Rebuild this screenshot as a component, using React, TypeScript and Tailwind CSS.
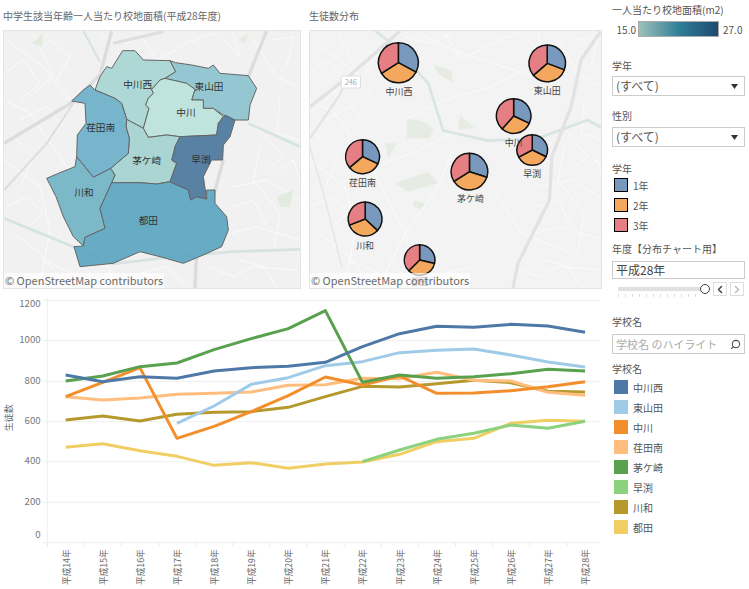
import { ChevronLeft, ChevronRight, Search } from "lucide-react";

type Pt = [number, number];

// map coordinates are 3x screen pixels
const regions: { name: string; fill: string; label: Pt; pts: Pt[] }[] = [
  { name: "中川西", fill: "#a9d6d4", label: [413, 255], pts: [[368,152],[405,152],[430,180],[510,182],[527,215],[495,235],[480,240],[455,268],[460,280],[445,295],[437,315],[447,325],[430,385],[380,358],[365,310],[345,295],[285,270],[300,230],[320,200],[335,205]] },
  { name: "東山田", fill: "#8ec4cf", label: [627, 260], pts: [[510,182],[527,188],[575,195],[625,205],[640,195],[660,220],[745,227],[770,265],[750,315],[745,360],[700,360],[670,345],[640,325],[610,325],[610,300],[575,300],[585,268],[560,250],[495,235],[527,215]] },
  { name: "中川", fill: "#bce1db", label: [558, 338], pts: [[495,235],[480,240],[455,268],[460,280],[445,295],[437,315],[447,325],[430,385],[445,412],[500,405],[540,410],[650,405],[655,370],[670,350],[640,325],[610,325],[610,300],[575,300],[585,268],[560,250]] },
  { name: "茅ケ崎", fill: "#a5d3d0", label: [440, 482], pts: [[380,358],[430,385],[445,412],[500,405],[540,410],[525,440],[525,470],[515,480],[530,490],[510,545],[470,552],[420,548],[385,548],[335,548],[345,525],[332,505],[385,460],[388,415],[378,380]] },
  { name: "荏田南", fill: "#6fb1c8", label: [302, 384], pts: [[270,255],[285,270],[345,295],[365,310],[380,358],[378,380],[388,415],[385,460],[332,505],[280,532],[230,470],[232,405],[258,370],[255,310],[215,303],[250,270]] },
  { name: "川和", fill: "#74b4c5", label: [252, 578], pts: [[230,470],[280,532],[332,505],[345,525],[335,548],[300,625],[315,685],[255,712],[250,738],[220,710],[190,650],[168,590],[140,535],[180,518],[225,500]] },
  { name: "都田", fill: "#5fa7c2", label: [445, 662], pts: [[335,548],[420,548],[470,552],[510,545],[565,570],[572,600],[590,590],[620,597],[620,570],[645,570],[645,610],[680,650],[685,690],[665,740],[610,765],[550,790],[480,770],[420,755],[340,790],[240,800],[222,740],[250,738],[255,712],[315,685],[300,625]] },
  { name: "早渕", fill: "#4f7a9e", label: [603, 478], pts: [[540,410],[650,405],[655,370],[675,345],[705,360],[690,410],[670,435],[668,480],[635,480],[610,530],[620,597],[590,590],[572,600],[565,570],[530,555],[510,545],[530,490],[515,480],[525,440]] },
];

const pies = [
  { name: "中川西", c: [280, 188], r: 60, a: 118, b: 238, label: [282, 275] },
  { name: "東山田", c: [728, 190], r: 55, a: 111, b: 229, label: [728, 272] },
  { name: "中川", c: [627, 348], r: 52, a: 115, b: 222, label: [627, 428] },
  { name: "早渕", c: [683, 450], r: 46, a: 116, b: 242, label: [683, 520] },
  { name: "荏田南", c: [172, 470], r: 51, a: 115, b: 230, label: [172, 548] },
  { name: "茅ケ崎", c: [494, 515], r: 55, a: 108, b: 238, label: [497, 595] },
  { name: "川和", c: [180, 657], r: 51, a: 133, b: 249, label: [180, 737] },
  { name: "都田", c: [344, 780], r: 46, a: 103, b: 225, label: [344, 846] },
];

const series = [
  { color: "#f1ce63", from: 0, ys: [457,446,467,484,511,503,520,507,501,478,440,430,385,376,379] },
  { color: "#8cd17d", from: 8, ys: [500,465,433,415,390,400,379] },
  { color: "#b6992d", from: 0, ys: [375,363,378,358,352,350,337,305,274,276,266,256,263,289,291] },
  { color: "#ffbe7d", from: 0, ys: [305,315,309,298,295,291,271,269,250,251,232,256,258,292,301] },
  { color: "#f28e2b", from: 0, ys: [305,262,218,430,394,350,302,246,270,243,295,294,287,275,260] },
  { color: "#a0cbe8", from: 3, ys: [385,333,268,248,212,200,173,166,162,180,201,216] },
  { color: "#59a14f", from: 0, ys: [258,243,215,204,164,131,101,47,262,240,250,245,236,223,228] },
  { color: "#4e79a7", from: 0, ys: [240,260,245,250,228,218,214,202,155,116,94,97,88,93,112] },
];

const gridYs = [16, 137, 259, 380, 500, 622, 743];
const yLabels: [string, number][] = [["1200",25],["1000",135],["800",257],["600",378],["400",498],["200",620],["0",718]];
const years = ["14","15","16","17","18","19","20","21","22","23","24","25","26","27","28"];
const xAt = (i: number) => 197 + 111.3 * i;

const schools = [
  ["中川西", "#4e79a7"], ["東山田", "#a0cbe8"], ["中川", "#f28e2b"], ["荏田南", "#ffbe7d"],
  ["茅ケ崎", "#59a14f"], ["早渕", "#8cd17d"], ["川和", "#b6992d"], ["都田", "#f1ce63"],
];

const grades = [["1年", "#7899bd"], ["2年", "#f4a85e"], ["3年", "#e67f83"]];

const whiteRoads = [
  "M12 300 L90 340 L200 500 L300 700 L340 860",
  "M30 130 L130 200 L210 300",
  "M100 100 L160 230 L90 290",
  "M12 480 L120 560 L150 690 L120 860",
  "M700 560 L800 540 L900 600",
  "M690 700 L770 680 L900 720",
  "M760 120 L830 230 L900 260",
  "M840 300 L830 400 L900 420",
  "M720 780 L790 800 L830 860",
  "M420 100 L470 180 L560 130 L640 100",
  "M40 700 L120 760 L200 860",
  "M30 400 L100 470 L60 560",
  "M780 440 L760 540 L840 640 L820 760",
  "M12 220 L70 180 L120 250 L60 300",
  "M150 120 L210 170 L170 240",
  "M60 360 L140 320 L190 380",
  "M20 620 L80 590 L130 640 L70 690",
  "M130 780 L220 820 L300 860",
  "M420 820 L500 800 L560 860",
  "M620 800 L700 830 L760 800 L890 810",
  "M700 620 L760 600 L800 680",
  "M830 520 L880 480 L900 540",
  "M660 110 L720 170 L700 100",
  "M820 120 L880 110 L860 200",
  "M790 400 L850 470 L800 510",
  "M300 110 L380 130 L440 100",
];

const arc = (cx: number, cy: number, r: number, a: number, b: number) => {
  const p = (d: number) => [cx + r * Math.sin((d * Math.PI) / 180), cy - r * Math.cos((d * Math.PI) / 180)];
  const [x1, y1] = p(a);
  const [x2, y2] = p(b);
  return `M${cx} ${cy} L${x1} ${y1} A${r} ${r} 0 ${b - a > 180 ? 1 : 0} 1 ${x2} ${y2} Z`;
};

function Attribution() {
  return (
    <div className="absolute bottom-0 left-0 bg-white/70 pl-[1px] pr-[1px] text-[11px] leading-[15px] text-[#6b6b6b]">
      © OpenStreetMap contributors
    </div>
  );
}

function SchoolAreaMap() {
  return (
    <div className="relative h-[259px] w-[298px] border border-[#e4e4e4] bg-[#f1f1f1]">
      <svg viewBox="12 93 888 771" className="block h-full w-full" preserveAspectRatio="none">
        {whiteRoads.map((d) => (
          <path key={d} d={d} fill="none" stroke="#fbfbfb" strokeWidth="3" />
        ))}
        <path d="M12 655 L220 740 L340 792 L520 770 L700 755 L900 748" fill="none" stroke="#d5e3e2" strokeWidth="8" />
        <path d="M745 370 L900 440" fill="none" stroke="#d5e3e2" strokeWidth="8" />
        <path d="M250 93 L300 185" fill="none" stroke="#d5e3e2" strokeWidth="6" />
        <path d="M12 430 L220 305 L300 225 L335 93" fill="none" stroke="#dcdcdc" strokeWidth="10" />
        <path d="M12 570 L140 430 L220 310" fill="none" stroke="#dedede" strokeWidth="6" />
        <path d="M340 130 L490 95" fill="none" stroke="#dedede" strokeWidth="9" />
        <path d="M800 93 L745 230" fill="none" stroke="#dcdcdc" strokeWidth="10" />
        <path d="M670 480 L640 590 L590 750 L585 864" fill="none" stroke="#dcdcdc" strokeWidth="10" />
        <path d="M95 130 L130 100 L125 140 Z M715 120 L745 100 L735 130 Z M830 590 L880 570 L870 620 L840 620 Z" fill="#e3ebdf" />
        {regions.map((r) => (
          <polygon key={r.name} points={r.pts.map((p) => p.join(",")).join(" ")} fill={r.fill} fillOpacity="0.95" stroke="#666" strokeWidth="3" strokeLinejoin="round" />
        ))}
        {regions.map((r) => (
          <text key={r.name} x={r.label[0]} y={r.label[1] + 10} textAnchor="middle" fontSize="29" fill="#333">
            {r.name}
          </text>
        ))}
      </svg>
      <Attribution />
    </div>
  );
}

function StudentPieMap() {
  return (
    <div className="relative h-[259px] w-[293px] border border-[#e4e4e4] bg-[#f3f3f3]">
      <svg viewBox="14 93 876 771" className="block h-full w-full" preserveAspectRatio="none">
        {whiteRoads.map((d) => (
          <path key={d} d={d} fill="none" stroke="#fbfbfb" strokeWidth="3" />
        ))}
        <path d="M300 360 L420 300 L560 260 L660 210 M360 110 L470 160 L660 220 M220 500 L340 450 L480 380 M560 560 L650 700 L800 760 M440 460 L400 560 L300 700 L240 820" fill="none" stroke="#fbfbfb" strokeWidth="3" />
        <path d="M305 360 Q340 350 385 385 L375 415 L305 415 Z M465 345 L510 385 L460 390 Z M270 550 L370 515 L400 550 L310 575 Z M325 600 L360 610 L350 628 L325 620 Z M240 430 L275 430 L250 475 Z M385 195 L440 210 L445 250 L400 220 Z" fill="#e6ece3" />
        <path d="M210 93 L260 130 L370 250 L415 392 L550 422 L700 415 L850 360 L890 382" fill="none" stroke="#d8e5e4" strokeWidth="8" />
        <path d="M14 320 L130 230 L285 93" fill="none" stroke="#e2e2e2" strokeWidth="10" />
        <path d="M14 415 L100 290 L130 230" fill="none" stroke="#e2e2e2" strokeWidth="6" />
        <path d="M888 95 L830 180 L800 320 L742 470 L735 600 L640 790 L625 864" fill="none" stroke="#e2e2e2" strokeWidth="10" />
        <path d="M14 440 L60 600 L110 800" fill="none" stroke="#e5e5e5" strokeWidth="4" />
        <rect x="108" y="228" width="58" height="36" rx="3" fill="#fff" stroke="#ddd" strokeWidth="3" />
        <text x="137" y="254" textAnchor="middle" fontSize="22" fill="#aaa">246</text>
        {pies.map((p) => (
          <g key={p.name} stroke="#111" strokeWidth="4.5" strokeLinejoin="round">
            <path d={arc(p.c[0], p.c[1], p.r, 0, p.a)} fill="#7899bd" />
            <path d={arc(p.c[0], p.c[1], p.r, p.a, p.b)} fill="#f4a85e" />
            <path d={arc(p.c[0], p.c[1], p.r, p.b, 360)} fill="#e67f83" />
          </g>
        ))}
        {pies.map((p) => (
          <text key={p.name} x={p.label[0]} y={p.label[1] + 10} textAnchor="middle" fontSize="27" fill="#444">
            {p.name}
          </text>
        ))}
      </svg>
      <Attribution />
    </div>
  );
}

function LineChart() {
  return (
    <svg viewBox="0 0 1815 882" className="block h-[294px] w-[605px]">
      {gridYs.map((y) => (
        <line key={y} x1="128" x2="1800" y1={y} y2={y} stroke="#efefef" strokeWidth="3" />
      ))}
      <line x1="142" x2="142" y1="10" y2="755" stroke="#efefef" strokeWidth="3" />
      {years.map((_, i) => (
        <line key={i} x1={142 + 111.3 * i} x2={142 + 111.3 * i} y1="743" y2="755" stroke="#e8e8e8" strokeWidth="3" />
      ))}
      {yLabels.map(([t, y]) => (
        <text key={t} x="122" y={y + 10} textAnchor="end" fontSize="29" fill="#777">
          {t}
        </text>
      ))}
      <text transform="rotate(-90 27 368)" x="27" y="368" textAnchor="middle" dominantBaseline="central" fontSize="27" fill="#666">
        生徒数
      </text>
      {years.map((y, i) => (
        <text key={y} transform={`rotate(-90 ${xAt(i)} 870)`} x={xAt(i)} y="870" dominantBaseline="central" fontSize="26" fill="#666">
          平成{y}年
        </text>
      ))}
      {series.map((s) => (
        <polyline
          key={s.color}
          points={s.ys.map((y, i) => `${xAt(i + s.from)},${y}`).join(" ")}
          fill="none"
          stroke={s.color}
          strokeWidth="9"
          strokeLinejoin="round"
        />
      ))}
    </svg>
  );
}

function Dropdown() {
  return (
    <div className="flex h-[20px] items-center justify-between border border-[#cccccc] pl-[3px] pr-[6px] text-[12px] text-[#555]">
      <span>(すべて)</span>
      <svg width="7" height="5" viewBox="0 0 7 5">
        <path d="M0 0 H7 L3.5 5 Z" fill="#333" />
      </svg>
    </div>
  );
}

function Label({ children, className }: { children: string; className: string }) {
  return <div className={`text-[10px] leading-[14px] text-[#555] ${className}`}>{children}</div>;
}

function Sidebar() {
  return (
    <div className="w-[144px] pl-[7px] pr-[4px]">
      <Label className="pt-[3px]">一人当たり校地面積(m2)</Label>
      <div className="mt-[4px] flex items-center text-[10px] text-[#555]">
        <span className="w-[24px] text-right">15.0</span>
        <div className="ml-[2px] h-[16px] w-[81px] border border-[#aaa] bg-gradient-to-r from-[#9bc0b8] via-[#2f8099] to-[#1f4a70]" />
        <span className="ml-[4px]">27.0</span>
      </div>
      <Label className="mt-[22px]">学年</Label>
      <div className="mt-[3px]"><Dropdown /></div>
      <Label className="mt-[13px]">性別</Label>
      <div className="mt-[4px]"><Dropdown /></div>
      <Label className="mt-[15px]">学年</Label>
      <div className="mt-[2px] flex flex-col gap-[6px] pl-[2px]">
        {grades.map(([t, c]) => (
          <div key={t} className="flex h-[14px] items-center gap-[5px] text-[10px] text-[#555]">
            <span className="h-[14px] w-[14px] border border-black" style={{ backgroundColor: c }} />
            {t}
          </div>
        ))}
      </div>
      <Label className="mt-[10px]">年度【分布チャート用】</Label>
      <div className="mt-[5px] flex h-[18px] items-center border border-[#cccccc] pl-[3px] text-[12px] text-[#444]">平成28年</div>
      <div className="flex items-center pl-[6px]">
        <div className="relative mt-[2px] h-[16px] w-[95px]">
          <div className="mt-[6px] h-[4px] w-[84px] bg-[#e0e0e0]" />
          <div className="absolute left-[82px] top-[3px] h-[10px] w-[10px] rounded-full border border-[#444] bg-white" />
          <div className="mt-[3px] h-[3px] w-[84px] bg-[repeating-linear-gradient(90deg,#ddd_0,#ddd_1px,transparent_1px,transparent_7px)]" />
        </div>
        <div className="mt-[2px] flex h-[14px] w-[14px] items-center justify-center border border-[#ddd]">
          <ChevronLeft size={13} strokeWidth={3} color="#444" />
        </div>
        <div className="ml-[3px] mt-[2px] flex h-[14px] w-[14px] items-center justify-center border border-[#ddd]">
          <ChevronRight size={13} strokeWidth={3} color="#bbb" />
        </div>
      </div>
      <Label className="mt-[18px]">学校名</Label>
      <div className="mt-[5px] flex h-[20px] items-center justify-between border border-[#cccccc] pl-[3px] pr-[3px] text-[11px] text-[#aaa]">
        <span>学校名 のハイライト</span>
        <Search size={11} color="#444" strokeWidth={2.2} className="-scale-x-100" />
      </div>
      <Label className="mt-[8px]">学校名</Label>
      <div className="mt-[4px] flex flex-col gap-[6px] pl-[2px]">
        {schools.map(([t, c]) => (
          <div key={t} className="flex h-[14px] items-center gap-[5px] text-[10px] text-[#555]">
            <span className="h-[14px] w-[14px]" style={{ backgroundColor: c }} />
            {t}
          </div>
        ))}
      </div>
    </div>
  );
}

export default function App() {
  return (
    <div className="flex h-[589px] w-[749px] overflow-hidden bg-white font-['Noto_Sans_CJK_JP','Noto_Sans',sans-serif]">
      <div className="w-[605px]">
        <div className="flex gap-[8px] pl-[3px]">
          <div>
            <div className="flex h-[30px] items-center text-[10px] text-[#666]">中学生該当年齢一人当たり校地面積(平成28年度)</div>
            <SchoolAreaMap />
          </div>
          <div>
            <div className="flex h-[30px] items-center text-[10px] text-[#666]">生徒数分布</div>
            <StudentPieMap />
          </div>
        </div>
        <div className="mt-[6px]">
          <LineChart />
        </div>
      </div>
      <Sidebar />
    </div>
  );
}
